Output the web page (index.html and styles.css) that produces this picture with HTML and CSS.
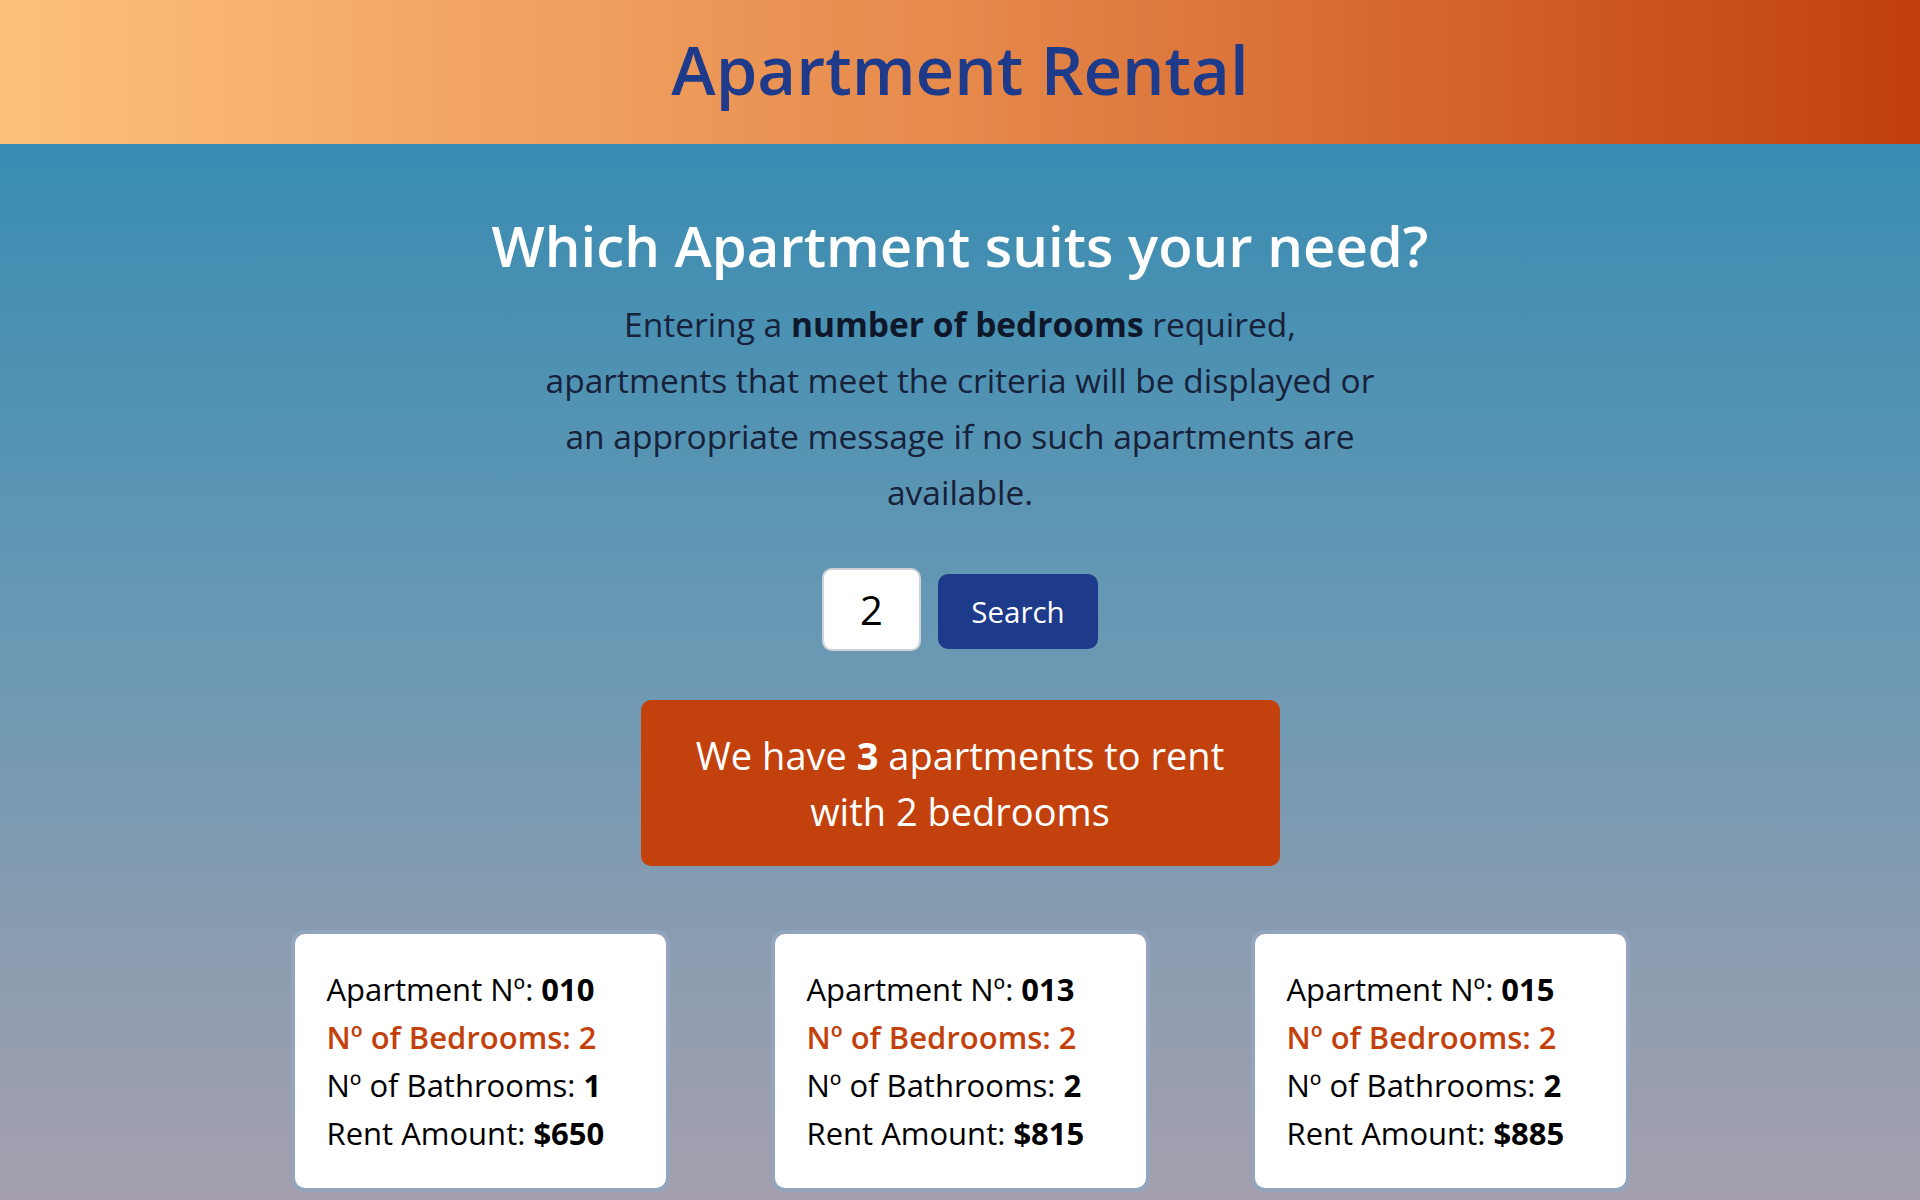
FILE: index.html
```html
<!DOCTYPE html>
<html lang="en">
<head>
<meta charset="utf-8">
<title>Apartment Rental</title>
<link rel="stylesheet" href="styles.css">
</head>
<body>
<header class="site-header">
  <h1 class="site-title">Apartment Rental</h1>
</header>
<main class="main">
  <h2 class="question">Which Apartment suits your need?</h2>
  <p class="intro">Entering a <strong>number of bedrooms</strong> required, apartments that meet the criteria will be displayed or an appropriate message if no such apartments are available.</p>
  <form class="search" onsubmit="return false;">
    <input class="search-input" type="text" value="2">
    <button class="search-btn" type="button">Search</button>
  </form>
  <div class="result">We have <strong>3</strong> apartments to rent with 2 bedrooms</div>
  <div class="cards">
    <div class="card">
      <div class="row">Apartment Nº: <strong>010</strong></div>
      <div class="row beds">Nº of Bedrooms: 2</div>
      <div class="row">Nº of Bathrooms: <strong>1</strong></div>
      <div class="row">Rent Amount: <strong>$650</strong></div>
    </div>
    <div class="card">
      <div class="row">Apartment Nº: <strong>013</strong></div>
      <div class="row beds">Nº of Bedrooms: 2</div>
      <div class="row">Nº of Bathrooms: <strong>2</strong></div>
      <div class="row">Rent Amount: <strong>$815</strong></div>
    </div>
    <div class="card">
      <div class="row">Apartment Nº: <strong>015</strong></div>
      <div class="row beds">Nº of Bedrooms: 2</div>
      <div class="row">Nº of Bathrooms: <strong>2</strong></div>
      <div class="row">Rent Amount: <strong>$885</strong></div>
    </div>
  </div>
</main>
</body>
</html>
```
FILE: styles.css
```css
* { box-sizing: border-box; }
html, body { margin: 0; padding: 0; }
body {
  font-family: "Open Sans", "Noto Sans", sans-serif;
  background: linear-gradient(to bottom, #2a88b1 0px, #6598b4 600px, #a59fad 1200px);
  min-height: 1200px;
  overflow: hidden;
}
.site-header {
  height: 144px;
  display: flex;
  align-items: center;
  justify-content: center;
  background: linear-gradient(to right, #fec17b 0%, #e6894b 50%, #c13f0d 100%);
}
.site-title {
  margin: 0;
  font-size: 67px;
  font-weight: 600;
  color: #1e3a8a;
  line-height: 1;
  padding-bottom: 6px;
}
.main {
  display: flex;
  flex-direction: column;
  align-items: center;
  padding-top: 68px;
}
.question {
  margin: 0;
  font-size: 56.3px;
  line-height: 67px;
  font-weight: 600;
  color: #ffffff;
}
.intro {
  margin: 17px 0 0;
  width: 845px;
  text-align: center;
  font-size: 33.5px;
  line-height: 56px;
  color: #17213a;
}
.intro strong { font-weight: 700; color: #0f172a; }
.search {
  margin-top: 48px;
  display: flex;
  align-items: center;
  gap: 17px;
}
.search-input {
  width: 99px;
  height: 83px;
  border: 2px solid #cfd3d9;
  border-radius: 10px;
  background: #fff;
  text-align: center;
  font-family: inherit;
  font-size: 40px;
  color: #000;
  padding: 0;
}
.search-btn {
  width: 160px;
  height: 75px;
  border: none;
  border-radius: 10px;
  background: #1e3a8a;
  color: #fff;
  font-family: inherit;
  font-size: 29.5px;
  margin-top: 4px;
}
.result {
  margin-top: 49px;
  width: 639px;
  padding: 27px 40px;
  background: #c2410c;
  color: #fff;
  border-radius: 10px;
  text-align: center;
  font-size: 38px;
  line-height: 56px;
}
.result strong { font-weight: 700; }
.cards {
  margin-top: 64px;
  display: flex;
  gap: 101px;
}
.card {
  width: 379px;
  background: #fff;
  border: 4px solid #93a5bd;
  border-radius: 14px;
  padding: 31px 32px;
  font-size: 31px;
  line-height: 48px;
  color: #000;
  white-space: nowrap;
}
.card strong { font-weight: 700; }
.row.beds { color: #c2410c; font-weight: 600; }
```
